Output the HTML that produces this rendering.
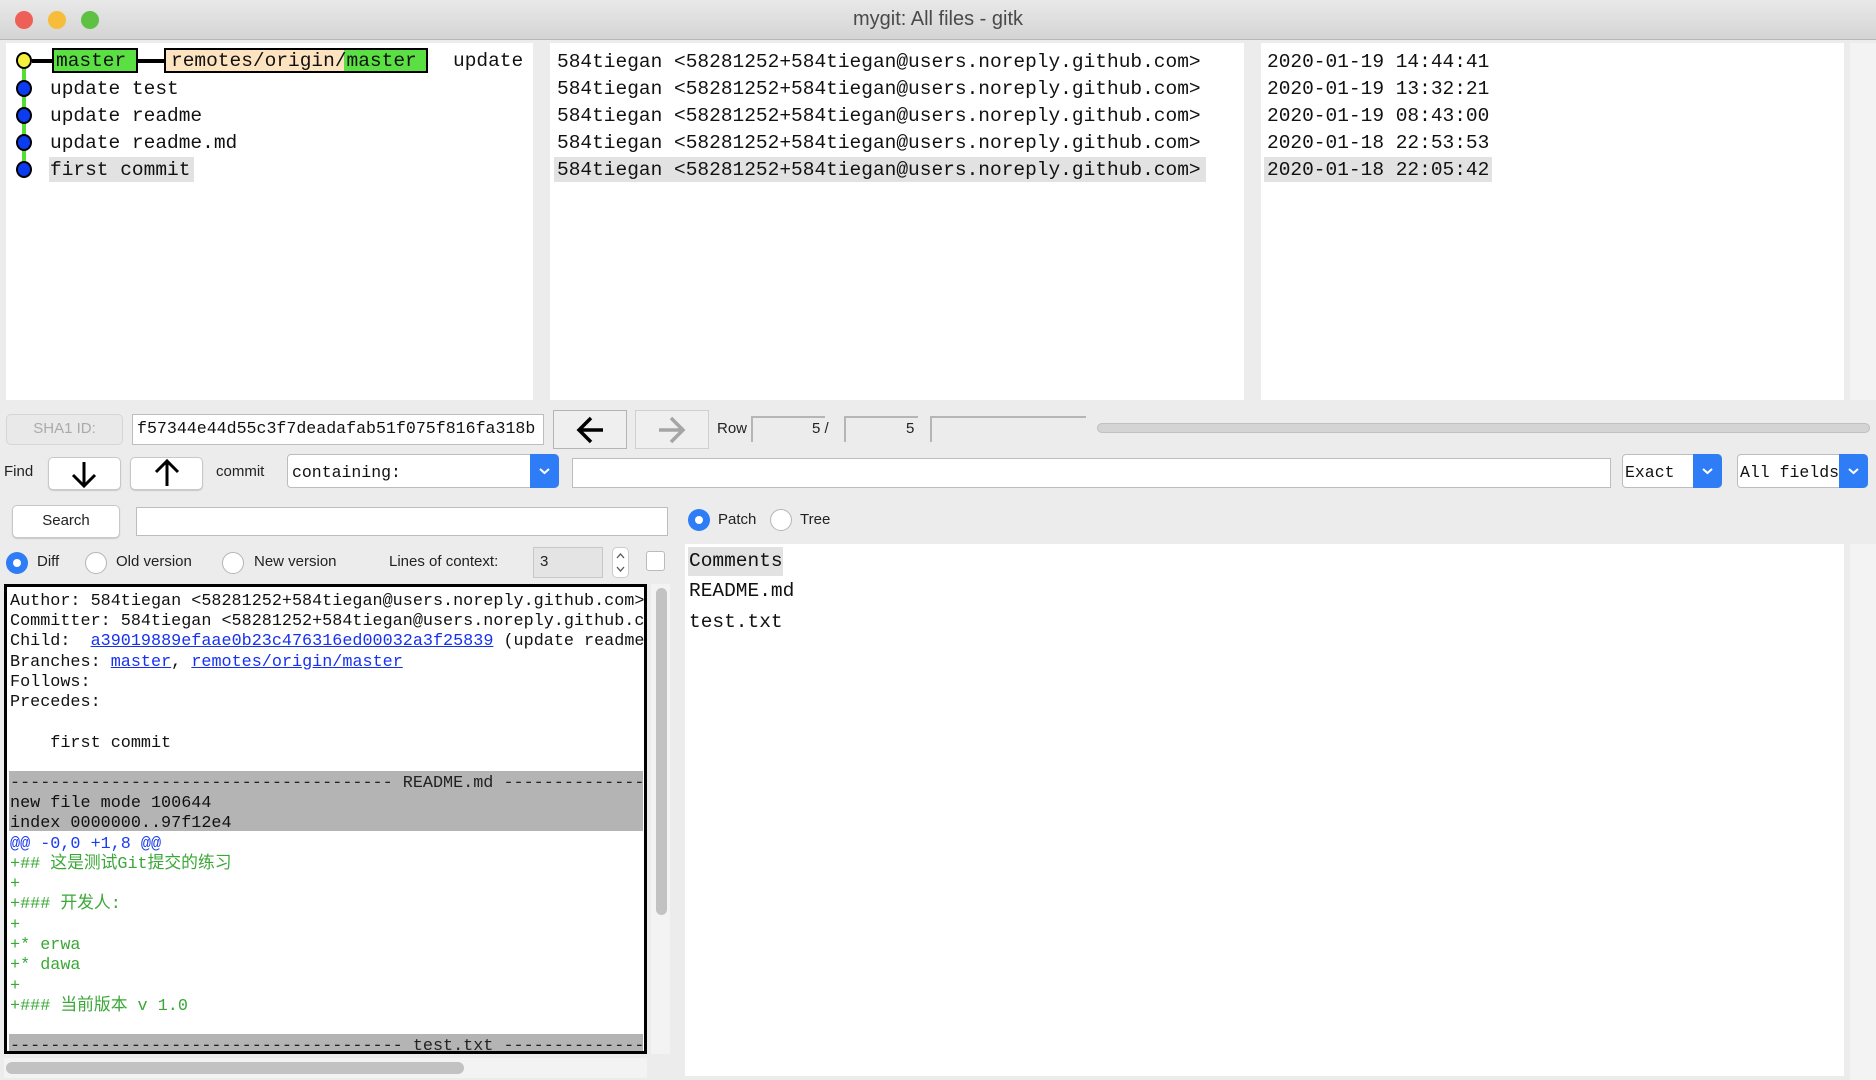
<!DOCTYPE html>
<html><head><meta charset="utf-8"><style>
*{box-sizing:border-box;margin:0;padding:0}
body{width:1876px;height:1080px;background:#ececec;position:relative;overflow:hidden;font-family:"Liberation Sans","Noto Sans CJK SC",sans-serif}
.a{position:absolute}
.mono{font-family:"Liberation Mono","Noto Sans CJK SC",monospace;white-space:pre}
.pane{position:absolute;background:#fff}
.btn{position:absolute;background:#fff;border:1px solid #c8c8c8;border-radius:5px;box-shadow:0 1px 1px rgba(0,0,0,.15)}
.fld{position:absolute;background:#fff;border:1px solid #bdbdbd}
.sm{font-size:15px;color:#222}
.radio{position:absolute;width:22px;height:22px;border-radius:50%;background:#fff;border:1px solid #b5b5b5}
.radio.on{background:#2e7cf6;border:none}
.radio.on:after{content:"";position:absolute;left:7px;top:7px;width:8px;height:8px;border-radius:50%;background:#fff}
.blue{position:absolute;background:#2e7cf6;border-radius:0 5px 5px 0}
.row{position:absolute;left:0;height:27px;line-height:27px;font-size:19.5px;color:#111}
.dl{position:absolute;left:7px;height:20.3px;line-height:20.3px;font-size:16.8px;color:#111}
</style></head><body>
<div class="a" style="left:0;top:0;width:1876px;height:40px;background:linear-gradient(#e9e9e9,#d4d4d4);border-bottom:1px solid #b8b8b8"></div>
<div class="a" style="left:15px;top:11px;width:18px;height:18px;border-radius:50%;background:#ee5f58"></div>
<div class="a" style="left:48px;top:11px;width:18px;height:18px;border-radius:50%;background:#f6bc3a"></div>
<div class="a" style="left:81px;top:11px;width:18px;height:18px;border-radius:50%;background:#5ec143"></div>
<div class="a" style="left:0;top:8px;width:1876px;text-align:center;font-size:20px;color:#4a4a4a">mygit: All files - gitk</div>

<div class="pane" style="left:6px;top:43px;width:527px;height:357px"></div>
<div class="pane" style="left:550px;top:43px;width:694px;height:357px"></div>
<div class="pane" style="left:1261px;top:43px;width:583px;height:357px"></div>
<div class="a" style="left:1850px;top:43px;width:26px;height:357px;background:#f3f3f3"></div>

<div class="a" style="left:22px;top:61px;width:4px;height:110px;background:#55dd33"></div>
<div class="a" style="left:16px;top:52px;width:16px;height:17px;border-radius:50%;background:#f4f03c;border:2px solid #000"></div>
<div class="a" style="left:32px;top:59px;width:20px;height:4px;background:#000"></div>
<div class="a" style="left:136px;top:59px;width:28px;height:4px;background:#000"></div>
<div class="a" style="left:52px;top:48px;width:86px;height:25px;background:#5ae043;border:2px solid #000"></div>
<div class="a" style="left:164px;top:48px;width:264px;height:25px;background:linear-gradient(90deg,#fde3c0 0,#fde3c0 178px,#5ae043 178px);border:2px solid #000"></div>
<div class="a" style="left:16px;top:80px;width:16px;height:17px;border-radius:50%;background:#0b3cf0;border:2px solid #000"></div>
<div class="a" style="left:16px;top:107px;width:16px;height:17px;border-radius:50%;background:#0b3cf0;border:2px solid #000"></div>
<div class="a" style="left:16px;top:134px;width:16px;height:17px;border-radius:50%;background:#0b3cf0;border:2px solid #000"></div>
<div class="a" style="left:16px;top:161px;width:16px;height:17px;border-radius:50%;background:#0b3cf0;border:2px solid #000"></div>
<div class="a" style="left:49px;top:157px;width:145px;height:25px;background:#e2e2e2"></div>
<div class="mono row" style="left:56px;top:48px">master</div>
<div class="mono row" style="left:171px;top:48px">remotes/origin/master</div>
<div class="mono row" style="left:453px;top:48px">update</div>
<div class="mono row" style="left:50px;top:76px">update test</div>
<div class="mono row" style="left:50px;top:103px">update readme</div>
<div class="mono row" style="left:50px;top:130px">update readme.md</div>
<div class="mono row" style="left:50px;top:157px">first commit</div>

<div class="a" style="left:554px;top:157px;width:652px;height:25px;background:#e2e2e2"></div>
<div class="mono row" style="left:557px;top:49px">584tiegan &lt;58281252+584tiegan@users.noreply.github.com&gt;</div>
<div class="mono row" style="left:557px;top:76px">584tiegan &lt;58281252+584tiegan@users.noreply.github.com&gt;</div>
<div class="mono row" style="left:557px;top:103px">584tiegan &lt;58281252+584tiegan@users.noreply.github.com&gt;</div>
<div class="mono row" style="left:557px;top:130px">584tiegan &lt;58281252+584tiegan@users.noreply.github.com&gt;</div>
<div class="mono row" style="left:557px;top:157px">584tiegan &lt;58281252+584tiegan@users.noreply.github.com&gt;</div>

<div class="a" style="left:1264px;top:157px;width:228px;height:25px;background:#e2e2e2"></div>
<div class="mono row" style="left:1267px;top:49px">2020-01-19 14:44:41</div>
<div class="mono row" style="left:1267px;top:76px">2020-01-19 13:32:21</div>
<div class="mono row" style="left:1267px;top:103px">2020-01-19 08:43:00</div>
<div class="mono row" style="left:1267px;top:130px">2020-01-18 22:53:53</div>
<div class="mono row" style="left:1267px;top:157px">2020-01-18 22:05:42</div>

<div class="btn" style="left:6px;top:414px;width:117px;height:31px;background:#e9e9e9;border-color:#d6d6d6;box-shadow:none"></div>
<div class="a sm" style="left:6px;top:420px;width:117px;text-align:center;color:#aaa">SHA1 ID:</div>
<div class="fld" style="left:132px;top:414px;width:412px;height:31px;overflow:hidden"></div>
<div class="mono a" style="left:137px;top:419px;font-size:16.6px;color:#111">f57344e44d55c3f7deadafab51f075f816fa318b</div>
<div class="a" style="left:553px;top:410px;width:74px;height:39px;border:1px solid #b4b4b4;background:#efefef"></div>
<div class="a" style="left:635px;top:410px;width:74px;height:39px;border:1px solid #d0d0d0;background:#efefef"></div>
<svg class="a" style="left:553px;top:410px" width="74" height="39"><path d="M26 20H50M38 8L26 20L38 32" stroke="#000" stroke-width="3.5" fill="none"/></svg>
<svg class="a" style="left:635px;top:410px" width="74" height="39"><path d="M24 20H48M36 8L48 20L36 32" stroke="#a5a5a5" stroke-width="3.5" fill="none"/></svg>
<div class="a sm" style="left:717px;top:420px">Row</div>
<div class="a" style="left:751px;top:416px;width:74px;height:26px;border-top:2px solid #b5b5b5;border-left:2px solid #b5b5b5"></div>
<div class="a" style="left:844px;top:416px;width:74px;height:26px;border-top:2px solid #b5b5b5;border-left:2px solid #b5b5b5"></div>
<div class="a" style="left:930px;top:416px;width:156px;height:26px;border-top:2px solid #b5b5b5;border-left:2px solid #b5b5b5"></div>
<div class="a sm" style="left:812px;top:420px">5 /</div>
<div class="a sm" style="left:906px;top:420px">5</div>
<div class="a" style="left:1097px;top:423px;width:773px;height:10px;border-radius:5px;background:#d4d4d4;border:1px solid #c0c0c0"></div>

<div class="a sm" style="left:4px;top:463px">Find</div>
<div class="btn" style="left:48px;top:457px;width:73px;height:33px"></div>
<div class="btn" style="left:130px;top:457px;width:73px;height:33px"></div>
<svg class="a" style="left:48px;top:457px" width="73" height="33"><path d="M36 5V29M25 18L36 29L47 18" stroke="#000" stroke-width="3" fill="none"/></svg>
<svg class="a" style="left:130px;top:457px" width="73" height="33"><path d="M37 4V29M26 15L37 4L48 15" stroke="#000" stroke-width="3" fill="none"/></svg>
<div class="a sm" style="left:216px;top:463px">commit</div>
<div class="fld" style="left:287px;top:454px;width:272px;height:34px;border-radius:4px"></div>
<div class="blue" style="left:530px;top:454px;width:29px;height:34px"></div>
<svg class="a" style="left:530px;top:454px" width="29" height="34"><path d="M10 15L14.5 19L19 15" stroke="#fff" stroke-width="2" fill="none"/></svg>
<div class="mono a" style="left:292px;top:463px;font-size:16.5px;color:#111">containing:</div>
<div class="fld" style="left:572px;top:458px;width:1039px;height:30px"></div>
<div class="fld" style="left:1622px;top:454px;width:100px;height:34px;border-radius:4px"></div>
<div class="blue" style="left:1693px;top:454px;width:29px;height:34px"></div>
<svg class="a" style="left:1693px;top:454px" width="29" height="34"><path d="M10 15L14.5 19L19 15" stroke="#fff" stroke-width="2" fill="none"/></svg>
<div class="mono a" style="left:1625px;top:463px;font-size:16.5px;color:#111">Exact</div>
<div class="fld" style="left:1737px;top:454px;width:131px;height:34px;border-radius:4px"></div>
<div class="mono a" style="left:1740px;top:463px;font-size:16.5px;color:#111">All fields</div>
<div class="blue" style="left:1839px;top:454px;width:29px;height:34px"></div>
<svg class="a" style="left:1839px;top:454px" width="29" height="34"><path d="M10 15L14.5 19L19 15" stroke="#fff" stroke-width="2" fill="none"/></svg>

<div class="btn" style="left:12px;top:505px;width:108px;height:33px"></div>
<div class="a sm" style="left:12px;top:512px;width:108px;text-align:center">Search</div>
<div class="fld" style="left:136px;top:507px;width:532px;height:29px"></div>
<div class="radio on" style="left:688px;top:509px"></div>
<div class="a sm" style="left:718px;top:511px">Patch</div>
<div class="radio" style="left:770px;top:509px"></div>
<div class="a sm" style="left:800px;top:511px">Tree</div>

<div class="radio on" style="left:6px;top:552px"></div>
<div class="a sm" style="left:37px;top:553px">Diff</div>
<div class="radio" style="left:85px;top:552px"></div>
<div class="a sm" style="left:116px;top:553px">Old version</div>
<div class="radio" style="left:222px;top:552px"></div>
<div class="a sm" style="left:254px;top:553px">New version</div>
<div class="a sm" style="left:389px;top:553px">Lines of context:</div>
<div class="a" style="left:533px;top:547px;width:70px;height:31px;background:#e4e4e4;border:1px solid #c8c8c8"></div>
<div class="a sm" style="left:540px;top:553px">3</div>
<div class="a" style="left:612px;top:547px;width:17px;height:31px;background:#fff;border:1px solid #ccc;border-radius:5px"></div>
<svg class="a" style="left:612px;top:547px" width="17" height="31"><path d="M5 11L8.5 7L12 11M5 20L8.5 24L12 20" stroke="#555" stroke-width="1.3" fill="none"/></svg>
<div class="a" style="left:646px;top:551px;width:19px;height:20px;background:#fff;border:1px solid #bbb;border-radius:3px"></div>

<div class="pane" style="left:4px;top:584px;width:643px;height:470px;border:3px solid #000;overflow:hidden">
<div class="a" style="left:2px;top:184px;width:634px;height:60px;background:#b4b4b4"></div>
<div class="a" style="left:2px;top:447px;width:634px;height:20px;background:#b4b4b4"></div>
<div class="mono dl" style="top:5px;left:3px">Author: 584tiegan &lt;58281252+584tiegan@users.noreply.github.com&gt;</div>
<div class="mono dl" style="top:25px;left:3px">Committer: 584tiegan &lt;58281252+584tiegan@users.noreply.github.com&gt;</div>
<div class="mono dl" style="top:45px;left:3px">Child:  <span style="color:#1530f0;text-decoration:underline">a39019889efaae0b23c476316ed00032a3f25839</span> (update readme)</div>
<div class="mono dl" style="top:66px;left:3px">Branches: <span style="color:#1530f0;text-decoration:underline">master</span>, <span style="color:#1530f0;text-decoration:underline">remotes/origin/master</span></div>
<div class="mono dl" style="top:86px;left:3px">Follows:</div>
<div class="mono dl" style="top:106px;left:3px">Precedes:</div>
<div class="mono dl" style="top:147px;left:3px">    first commit</div>
<div class="mono dl" style="top:187px;left:3px;color:#222">-------------------------------------- README.md --------------------</div>
<div class="mono dl" style="top:207px;left:3px">new file mode 100644</div>
<div class="mono dl" style="top:227px;left:3px">index 0000000..97f12e4</div>
<div class="mono dl" style="top:248px;left:3px;color:#1a3cf0">@@ -0,0 +1,8 @@</div>
<div class="mono dl" style="top:268px;left:3px;color:#3aa836">+## 这是测试Git提交的练习</div>
<div class="mono dl" style="top:288px;left:3px;color:#3aa836">+</div>
<div class="mono dl" style="top:308px;left:3px;color:#3aa836">+### 开发人:</div>
<div class="mono dl" style="top:329px;left:3px;color:#3aa836">+</div>
<div class="mono dl" style="top:349px;left:3px;color:#3aa836">+* erwa</div>
<div class="mono dl" style="top:369px;left:3px;color:#3aa836">+* dawa</div>
<div class="mono dl" style="top:390px;left:3px;color:#3aa836">+</div>
<div class="mono dl" style="top:410px;left:3px;color:#3aa836">+### 当前版本 v 1.0</div>
<div class="mono dl" style="top:450px;left:3px;color:#222">--------------------------------------- test.txt --------------------</div>
</div>
<div class="a" style="left:651px;top:584px;width:19px;height:470px;background:#f3f3f3"></div>
<div class="a" style="left:656px;top:588px;width:11px;height:327px;border-radius:6px;background:#c2c2c2"></div>
<div class="a" style="left:4px;top:1058px;width:643px;height:20px;background:#f3f3f3"></div>
<div class="a" style="left:6px;top:1062px;width:458px;height:12px;border-radius:6px;background:#c2c2c2"></div>

<div class="pane" style="left:685px;top:544px;width:1159px;height:532px"></div>
<div class="a" style="left:1850px;top:544px;width:26px;height:536px;background:#f3f3f3"></div>
<div class="a" style="left:688px;top:547px;width:95px;height:29px;background:#e2e2e2"></div>
<div class="mono a" style="left:689px;top:548px;font-size:19.5px;line-height:27px;color:#111">Comments</div>
<div class="mono a" style="left:689px;top:578px;font-size:19.5px;line-height:27px;color:#111">README.md</div>
<div class="mono a" style="left:689px;top:609px;font-size:19.5px;line-height:27px;color:#111">test.txt</div>
</body></html>
